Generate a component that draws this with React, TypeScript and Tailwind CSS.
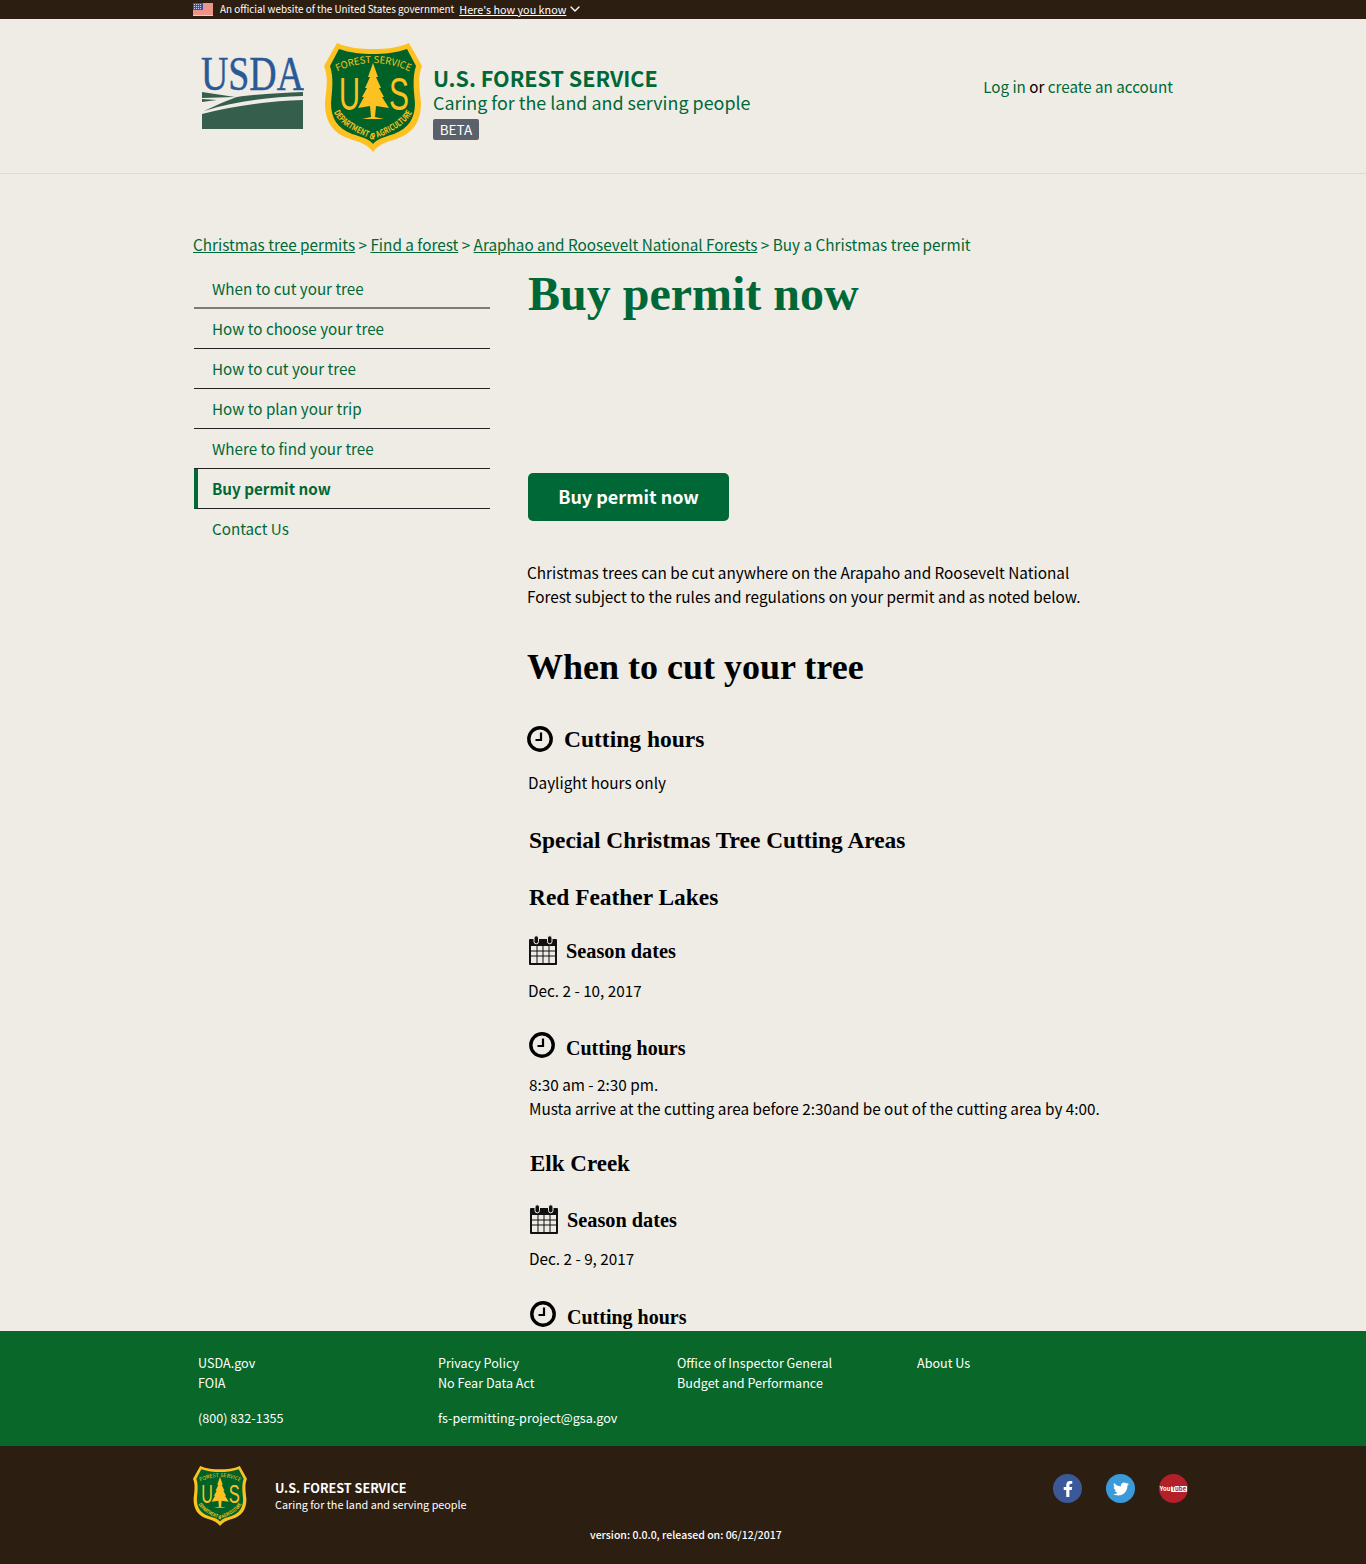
import { ChevronDown } from 'lucide-react'
import { FaFacebookF, FaTwitter } from 'react-icons/fa'

const sideLinks = [
  { label: 'When to cut your tree', cls: 'h-[40px] border-b-2 border-[#7d7b76]' },
  { label: 'How to choose your tree', cls: 'h-[40px] border-b border-[#222]' },
  { label: 'How to cut your tree', cls: 'h-[40px] border-b border-[#222]' },
  { label: 'How to plan your trip', cls: 'h-[40px] border-b border-[#222]' },
  { label: 'Where to find your tree', cls: 'h-[40px] border-b border-[#222]' },
]

function Shield({ className, id }: { className: string; id: string }) {
  return (
    <svg viewBox="0 0 98 109" className={className}>
      <path
        d="M13 0 C24 5 37 6 49 6 C61 6 74 5 85 0 L98 23 C93 35 96 48 97 60 C97 78 90 90 72 96 C62 99 54 102 49 109 C44 102 36 99 26 96 C8 90 1 78 1 60 C2 48 5 35 0 23 Z"
        fill="#fdc221"
      />
      <path
        d="M15 6 C26 10 38 11 49 11 C60 11 72 10 83 6 L92 23 C88 35 90 48 91 60 C91 75 85 85 70 91 C60 94 53 96 49 101 C45 96 38 94 28 91 C13 85 7 75 7 60 C8 48 10 35 6 23 Z"
        fill="#006227"
      />
      <path id={`${id}-top`} d="M12 29 Q49 11 87 29" fill="none" />
      <path id={`${id}-bot`} d="M8 64 C12 82 34 90 49 97 C64 90 86 82 90 64" fill="none" />
      <text fill="#fdc221" fontSize="9.6" fontFamily="'Noto Sans CJK SC',sans-serif">
        <textPath href={`#${id}-top`} startOffset="50%" textAnchor="middle">FOREST SERVICE</textPath>
      </text>
      <text fill="#fdc221" fontSize="8.6" fontWeight="600" fontFamily="'Noto Sans CJK SC',sans-serif">
        <textPath href={`#${id}-bot`} startOffset="50%" textAnchor="middle" textLength="98" lengthAdjust="spacingAndGlyphs">DEPARTMENT OF AGRICULTURE</textPath>
      </text>
      <text x="15" y="67" fill="#fdc221" fontSize="47" textLength="21" lengthAdjust="spacingAndGlyphs" fontFamily="'Liberation Sans',sans-serif">U</text>
      <text x="65" y="67" fill="#fdc221" fontSize="47" textLength="20" lengthAdjust="spacingAndGlyphs" fontFamily="'Liberation Sans',sans-serif">S</text>
      <path
        d="M49 20 L54 34 L52 34 L57 45 L55 45 L60 54 L58 54 L65 65 L52 63 L51 74 L60 76 L38 76 L47 74 L46 63 L34 65 L40 54 L38 54 L43 45 L41 45 L46 34 L44 34 Z"
        fill="#fdc221"
      />
    </svg>
  )
}

function UsdaLogo() {
  return (
    <svg viewBox="0 0 103 72" className="h-[72px] w-[103px] shrink-0">
      <text x="0" y="33" fill="#2a5a96" stroke="#2a5a96" strokeWidth="0.5" fontSize="49" textLength="103" lengthAdjust="spacingAndGlyphs" fontFamily="'Liberation Serif',serif">USDA</text>
      <path d="M1 35 L34 40 L1 41 Z M1 42 L16 43 L1 45 Z" fill="#355e4d" />
      <path d="M102 35 L102 39 C70 40 35 44 3 54 C20 46 30 42 36 40 C55 37 80 36 102 35 Z" fill="#355e4d" />
      <path d="M1 57 C35 48 70 44 102 43 L102 72 L1 72 Z" fill="#355e4d" />
    </svg>
  )
}

function ClockIcon({ className }: { className: string }) {
  return (
    <svg viewBox="0 0 26 26" className={className}>
      <circle cx="13" cy="13" r="11.2" fill="none" stroke="#000" strokeWidth="3.4" />
      <path d="M14 6.5 V14 H8.5" fill="none" stroke="#000" strokeWidth="2.2" />
    </svg>
  )
}

function CalendarIcon({ className }: { className: string }) {
  return (
    <svg viewBox="0 0 28 30" className={className}>
      <path d="M1 4 H27 Q28 4 28 5 V29 Q28 30 27 30 H1 Q0 30 0 29 V5 Q0 4 1 4 Z" fill="#111" />
      <rect x="5" y="0.8" width="4.5" height="8" rx="2.2" fill="#111" stroke="#efece6" strokeWidth="1" />
      <rect x="18.5" y="0.8" width="4.5" height="8" rx="2.2" fill="#111" stroke="#efece6" strokeWidth="1" />
      <path d="M2 11 H26 V28 H2 Z" fill="#efece6" />
      <path d="M2 16 H26 M2 21 H26 M8 11 V28 M14 11 V28 M20 11 V28" stroke="#111" strokeWidth="1" fill="none" />
    </svg>
  )
}

function Flag() {
  return (
    <svg viewBox="0 0 20 13" className="h-[13px] w-[20px]">
      <rect width="20" height="13" fill="#f6c9c0" />
      <path d="M0 1 H20 M0 3 H20 M0 5 H20 M0 7 H20 M0 9 H20 M0 11 H20" stroke="#e0604f" strokeWidth="1" />
      <rect width="10" height="7" fill="#3d4fa8" />
      <path d="M1 1.5 H9 M1 3.5 H9 M1 5.5 H9" stroke="#c9cff0" strokeWidth="1" strokeDasharray="1 1" />
    </svg>
  )
}

export default function App() {
  const serif = "font-['Liberation_Serif',serif] font-bold"

  return (
    <div className="h-[1564px] overflow-hidden bg-[#efece6] font-['Noto_Sans_CJK_SC',sans-serif] text-black">
      {/* gov banner */}
      <div className="h-[19px] bg-[#2d1e12] pl-[193px] text-white">
        <div className="flex h-[18px] items-center">
          <Flag />
          <span className="ml-[7px] text-[9.9px]">An official website of the United States government</span>
          <span className="ml-[5px] text-[10.8px] underline">Here's how you know</span>
          <ChevronDown className="ml-[1px] h-[16px] w-[16px]" />
        </div>
      </div>

      {/* header */}
      <header className="flex h-[155px] items-start border-b border-[#dedbd5] pl-[201px] pr-[193px]">
        <div className="mt-[38px]"><UsdaLogo /></div>
        <Shield id="hd" className="ml-[20px] mt-[24px] h-[109px] w-[98px] shrink-0" />
        <div className="ml-[11px] mt-[46px] text-[#006837]">
          <div className="text-[21.5px] font-semibold leading-[26px]">U.S. FOREST SERVICE</div>
          <div className="text-[17.9px] leading-[22px]">Caring for the land and serving people</div>
          <div className="mt-[6px] flex h-[21px] w-[46px] items-center justify-center rounded-[2px] bg-[#5b616b] text-[13.5px] text-white">BETA</div>
        </div>
        <div className="ml-auto mt-[55px] text-[15.2px] leading-[24px]">
          <span className="text-[#006837]">Log in</span> or <span className="text-[#006837]">create an account</span>
        </div>
      </header>

      {/* page */}
      <div className="h-[1157px] overflow-hidden pl-[193px]">
        <div className="mt-[58px] text-[15.3px] leading-[24px] text-[#006837]">
          <span className="underline">Christmas tree permits</span> &gt; <span className="underline">Find a forest</span> &gt; <span className="underline">Araphao and Roosevelt National Forests</span> &gt; Buy a Christmas tree permit
        </div>

        <div className="mt-[13px] flex">
          <nav className="ml-[1px] w-[296px] shrink-0 text-[15.2px] text-[#006837]">
            {sideLinks.map((l) => (
              <div key={l.label} className={`flex items-center pl-[18px] ${l.cls}`}>{l.label}</div>
            ))}
            <div className="flex h-[40px] items-center border-b border-l-4 border-[#222] border-l-[#006837] pl-[14px] font-bold">Buy permit now</div>
            <div className="flex h-[40px] items-center pb-[2px] pl-[18px]">Contact Us</div>
          </nav>

          <main className="ml-[37px] w-[640px] shrink-0 text-[15.3px] leading-[24px]">
            <h1 className={`${serif} h-[204px] pl-[1px] text-[48px] leading-[50px] text-[#006837]`}>Buy permit now</h1>
            <div className="ml-[1px] flex h-[48px] w-[201px] items-center justify-center rounded-[5px] bg-[#006837] pb-[3px] text-[18px] font-bold text-white">Buy permit now</div>

            <p className="mt-[39px]">Christmas trees can be cut anywhere on the Arapaho and Roosevelt National<br />Forest subject to the rules and regulations on your permit and as noted below.</p>

            <h2 className={`${serif} mt-[39px] text-[36px] leading-[40px]`}>When to cut your tree</h2>

            <div className="mt-[39px] flex h-[26px] items-center">
              <ClockIcon className="h-[26px] w-[26px]" />
              <h3 className={`${serif} ml-[11px] text-[23.5px]`}>Cutting hours</h3>
            </div>
            <p className="ml-[1px] mt-[18px]">Daylight hours only</p>

            <h3 className={`${serif} ml-[2px] mt-[31px] text-[23.4px] leading-[30px]`}>Special Christmas Tree Cutting Areas</h3>
            <h3 className={`${serif} ml-[2px] mt-[27px] text-[23.4px] leading-[30px]`}>Red Feather Lakes</h3>

            <div className="ml-[2px] mt-[23px] flex h-[30px] items-center">
              <CalendarIcon className="h-[30px] w-[28px]" />
              <h4 className={`${serif} ml-[9px] mt-[1px] text-[20.3px]`}>Season dates</h4>
            </div>
            <p className="ml-[1px] mt-[13px]">Dec. 2 - 10, 2017</p>

            <div className="ml-[2px] mt-[30px] flex h-[26px] items-center">
              <ClockIcon className="h-[26px] w-[26px]" />
              <h4 className={`${serif} ml-[11px] mt-[5px] text-[20px]`}>Cutting hours</h4>
            </div>
            <p className="ml-[2px] mt-[14px]">8:30 am - 2:30 pm.<br />Musta arrive at the cutting area before 2:30and be out of the cutting area by 4:00.</p>

            <h3 className={`${serif} ml-[3px] mt-[29px] text-[23px] leading-[30px]`}>Elk Creek</h3>

            <div className="ml-[3px] mt-[25px] flex h-[30px] items-center">
              <CalendarIcon className="h-[30px] w-[28px]" />
              <h4 className={`${serif} ml-[9px] mt-[1px] text-[20.3px]`}>Season dates</h4>
            </div>
            <p className="ml-[2px] mt-[12px]">Dec. 2 - 9, 2017</p>

            <div className="ml-[3px] mt-[31px] flex h-[26px] items-center">
              <ClockIcon className="h-[26px] w-[26px]" />
              <h4 className={`${serif} ml-[11px] mt-[5px] text-[20px]`}>Cutting hours</h4>
            </div>
          </main>
        </div>
      </div>

      {/* footer links */}
      <div className="grid h-[115px] grid-cols-[240px_239px_240px_240px] bg-[#086729] pl-[198px] pt-[22px] text-[12.6px] leading-[20px] text-white">
        <div>
          <div>USDA.gov</div>
          <div>FOIA</div>
          <div className="mt-[15px]">(800) 832-1355</div>
        </div>
        <div>
          <div>Privacy Policy</div>
          <div>No Fear Data Act</div>
          <div className="mt-[15px]">fs-permitting-project@gsa.gov</div>
        </div>
        <div>
          <div>Office of Inspector General</div>
          <div>Budget and Performance</div>
        </div>
        <div>
          <div>About Us</div>
        </div>
      </div>

      {/* footer brand */}
      <footer className="h-[118px] bg-[#2d1e12] text-white">
        <div className="flex pl-[193px] pr-[178px] pt-[20px]">
          <Shield id="ft" className="h-[60px] w-[54px] shrink-0" />
          <div className="ml-[28px] mt-[14px]">
            <div className="text-[12.6px] font-bold leading-[16px]">U.S. FOREST SERVICE</div>
            <div className="text-[10.8px] leading-[16px]">Caring for the land and serving people</div>
          </div>
          <div className="ml-auto mt-[8px] flex gap-[24px]">
            <div className="flex h-[29px] w-[29px] items-center justify-center rounded-full bg-[#3b5998]"><FaFacebookF className="h-[16px] w-[16px]" /></div>
            <div className="flex h-[29px] w-[29px] items-center justify-center rounded-full bg-[#3b9ad9]"><FaTwitter className="h-[16px] w-[16px]" /></div>
            <div className="flex h-[29px] w-[29px] items-center justify-center rounded-full bg-[#b3202a] text-[6px] font-bold leading-none">
              <span>You</span><span className="rounded-[1px] bg-white px-[1px] text-[#b3202a]">Tube</span>
            </div>
          </div>
        </div>
        <div className="mt-[1px] pl-[590px] text-[10.5px] font-medium leading-[16px]">version: 0.0.0, released on: 06/12/2017</div>
      </footer>
    </div>
  )
}
